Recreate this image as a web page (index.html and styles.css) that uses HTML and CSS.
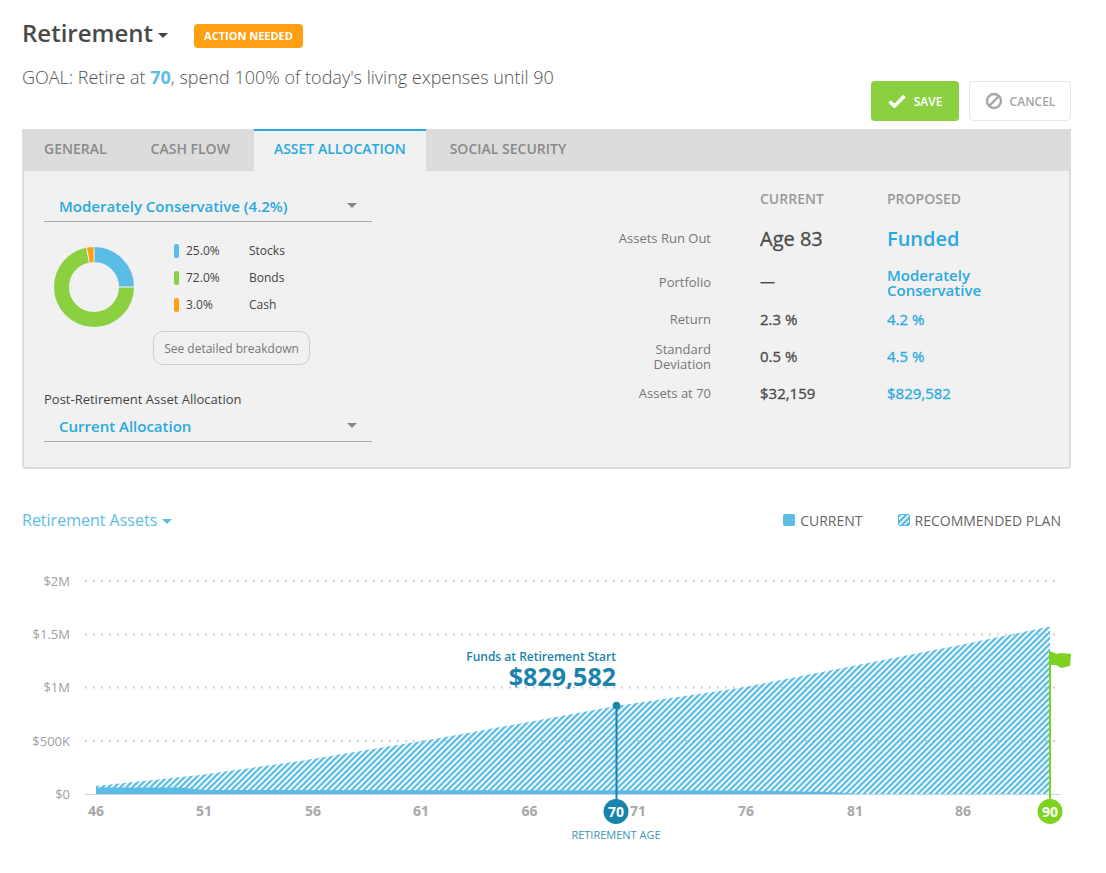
FILE: index.html
```html
<!DOCTYPE html>
<html lang="en">
<head>
  <meta charset="UTF-8" />
  <meta name="viewport" content="width=device-width, initial-scale=1.0" />
  <title>Retirement</title>
  <link rel="stylesheet" href="styles.css">
</head>
<body>
  <div class="page">
    <header class="top">
      <div class="top-left">
        <div class="title-row">
          <h1>Retirement</h1>
          <span class="caret caret-title"></span>
          <span class="badge">ACTION NEEDED</span>
        </div>
        <p class="goal">GOAL: Retire at <b>70</b>, spend 100% of today's living expenses until 90</p>
      </div>
      <div class="actions">
        <button class="btn btn-save">
          <svg width="18" height="14" viewBox="0 0 18 14"><path d="M1.5 7.5 L6.5 12 L16.5 2" fill="none" stroke="#fff" stroke-width="3.6"/></svg>
          SAVE
        </button>
        <button class="btn btn-cancel">
          <svg width="18" height="18" viewBox="0 0 18 18"><circle cx="9" cy="9" r="7" fill="none" stroke="#a9a9a9" stroke-width="2.4"/><path d="M4.2 13.8 L13.8 4.2" stroke="#a9a9a9" stroke-width="2.4"/></svg>
          CANCEL
        </button>
      </div>
    </header>

    <section class="panel">
      <nav class="tabs">
        <a class="tab">GENERAL</a>
        <a class="tab">CASH FLOW</a>
        <a class="tab active">ASSET ALLOCATION</a>
        <a class="tab">SOCIAL SECURITY</a>
      </nav>
      <div class="panel-body">
        <div class="alloc">
          <div class="select">
            <span>Moderately Conservative (4.2%)</span>
            <span class="caret caret-select"></span>
          </div>
          <div class="alloc-mix">
            <svg class="donut" width="84" height="84" viewBox="0 0 84 84">
              <g transform="rotate(-90 42 42)" fill="none" stroke-width="15">
                <circle cx="42" cy="42" r="32.5" stroke="#8bd041" pathLength="100" stroke-dasharray="72 28" stroke-dashoffset="-25"/>
                <circle cx="42" cy="42" r="32.5" stroke="#5bbde6" pathLength="100" stroke-dasharray="25 75"/>
                <circle cx="42" cy="42" r="32.5" stroke="#ff9f14" pathLength="100" stroke-dasharray="3 97" stroke-dashoffset="-97"/>
              </g>
              <path d="M42 2 V17 M67 42 H82 M34.500 2.700 L37.300 17.400" stroke="#f1f1f1" stroke-width="1"/>
            </svg>
            <div class="mix-side">
              <ul class="mix-list">
                <li><i class="chip chip-blue"></i><span class="pct">25.0%</span><span>Stocks</span></li>
                <li><i class="chip chip-green"></i><span class="pct">72.0%</span><span>Bonds</span></li>
                <li><i class="chip chip-orange"></i><span class="pct">3.0%</span><span>Cash</span></li>
              </ul>
              <button class="btn-breakdown">See detailed breakdown</button>
            </div>
          </div>
          <label class="post-label">Post-Retirement Asset Allocation</label>
          <div class="select select-post">
            <span>Current Allocation</span>
            <span class="caret caret-select"></span>
          </div>
        </div>

        <div class="stats">
          <div></div>
          <div class="stats-head">CURRENT</div>
          <div class="stats-head">PROPOSED</div>

          <div class="stats-label">Assets Run Out</div>
          <div class="val val-big">Age 83</div>
          <div class="val val-big val-funded">Funded</div>

          <div class="stats-label stats-label-low">Portfolio</div>
          <div class="val val-dash">—</div>
          <div class="val val-blue val-wrap">Moderately<br />Conservative</div>

          <div class="stats-label">Return</div>
          <div class="val">2.3 %</div>
          <div class="val val-blue">4.2 %</div>

          <div class="stats-label">Standard<br />Deviation</div>
          <div class="val">0.5 %</div>
          <div class="val val-blue">4.5 %</div>

          <div class="stats-label">Assets at 70</div>
          <div class="val">$32,159</div>
          <div class="val val-blue">$829,582</div>
        </div>
      </div>
    </section>

    <section class="chart-head">
      <div class="chart-title">Retirement Assets <span class="caret caret-chart"></span></div>
      <div class="legend">
        <span class="legend-item"><i class="swatch swatch-solid"></i>CURRENT</span>
        <span class="legend-item"><i class="swatch swatch-hatch"></i>RECOMMENDED PLAN</span>
      </div>
    </section>

    <svg class="chart" width="1106" height="290" viewBox="0 560 1106 290">
      <defs>
        <pattern id="hatch" width="4.243" height="4.243" patternUnits="userSpaceOnUse" patternTransform="rotate(45)">
          <rect width="2.3" height="4.243" fill="#5bbde6"/>
        </pattern>
      </defs>

      <g class="grid">
        <line x1="85" x2="1057" y1="581" y2="581"/>
        <line x1="85" x2="1057" y1="634.500" y2="634.500"/>
        <line x1="85" x2="1057" y1="687.500" y2="687.500"/>
        <line x1="85" x2="1057" y1="741" y2="741"/>
      </g>
      <g class="y-labels">
        <text x="70" y="586">$2M</text>
        <text x="70" y="639">$1.5M</text>
        <text x="70" y="692">$1M</text>
        <text x="70" y="746">$500K</text>
        <text x="70" y="799">$0</text>
      </g>

      <path d="M96 794 V786 L200 775 L300 761 L440 738 L616 706 L740 688 L960 645 L1050 626.500 V794 Z" fill="url(#hatch)"/>
      <path d="M96 794 V787.500 H180 L205 790 L740 790.500 L830 792 L860 794 Z" fill="#5bbde6"/>
      <line class="baseline" x1="85" x2="1060" y1="794.500" y2="794.500"/>

      <g class="x-labels">
        <text x="96" y="816">46</text>
        <text x="204" y="816">51</text>
        <text x="313" y="816">56</text>
        <text x="421" y="816">61</text>
        <text x="529.500" y="816">66</text>
        <text x="638" y="816">71</text>
        <text x="746" y="816">76</text>
        <text x="855" y="816">81</text>
        <text x="963" y="816">86</text>
      </g>

      <text class="funds-label" x="616" y="661">Funds at Retirement Start</text>
      <text class="funds-value" x="616" y="686">$829,582</text>
      <line x1="616.500" x2="616.500" y1="706" y2="800" stroke="#1a83ab" stroke-width="2"/>
      <circle cx="616.500" cy="705.500" r="3.800" fill="#1a83ab"/>
      <circle cx="616" cy="811.500" r="12.500" fill="#1a83ab"/>
      <text class="marker-text" x="616" y="816.500">70</text>
      <text class="age-label" x="616" y="839">RETIREMENT AGE</text>

      <line x1="1050" x2="1050" y1="652" y2="800" stroke="#7ed321" stroke-width="2"/>
      <path d="M1050 651 L1057 654 L1061 653 L1071 654 L1070 666 L1061 668 L1056 665 L1050 665 Z" fill="#7ed321"/>
      <circle cx="1050" cy="811.500" r="12.500" fill="#7ed321"/>
      <text class="marker-text" x="1050" y="816.500">90</text>
    </svg>
  </div>
</body>
</html>
```

FILE: styles.css
```css
body {
  margin: 0;
  font-family: 'Open Sans', sans-serif;
  background-color: #fff;
  color: #444;
}

.page {
  width: 1049px;
  margin-left: 22px;
}

/* top */
.top {
  height: 129px;
  display: flex;
  justify-content: space-between;
  align-items: flex-end;
  box-sizing: border-box;
  padding-bottom: 8px;
}

.top-left {
  align-self: flex-start;
}

.title-row {
  display: flex;
  align-items: center;
  height: 24px;
  margin-top: 24px;
}

h1 {
  margin: -8px 0 0 0;
  font-size: 24px;
  font-weight: 600;
  color: #4a4a4a;
}

.caret {
  display: inline-block;
  width: 0;
  height: 0;
  border-left: 5px solid transparent;
  border-right: 5px solid transparent;
  border-top: 5px solid #444;
}

.caret-title {
  margin-left: 5px;
  margin-top: -2px;
}

.badge {
  margin-left: 26px;
  width: 109px;
  height: 24px;
  line-height: 24px;
  text-align: center;
  background-color: #ff9f14;
  border-radius: 4px;
  color: #fff;
  font-size: 11px;
  font-weight: 700;
}

.goal {
  margin: 17px 0 0 0;
  font-size: 18px;
  line-height: 24px;
  font-weight: 300;
  color: #555;
}

.goal b {
  color: #5bbde6;
  font-weight: 700;
}

.actions {
  display: flex;
  gap: 10px;
}

.btn {
  height: 40px;
  display: flex;
  align-items: center;
  justify-content: center;
  border-radius: 4px;
  font-family: inherit;
  font-size: 12px;
  padding: 0;
}

.btn-save {
  width: 88px;
  gap: 8px;
  background-color: #8bd041;
  border: none;
  color: #fff;
  font-weight: 600;
}

.btn-cancel {
  width: 102px;
  gap: 7px;
  background-color: #fff;
  border: 1px solid #e8e8e8;
  color: #a4a4a4;
  font-weight: 600;
}

/* panel */
.tabs {
  display: flex;
  height: 42px;
  background-color: #dcdcdc;
}

.tab {
  padding: 0 22px;
  line-height: 36px;
  font-size: 14px;
  font-weight: 600;
  color: #8a8a8a;
  border-top: 2px solid transparent;
}

.tab.active {
  margin: 0 2px;
  padding: 0 20px;
  background-color: #f1f1f1;
  border-top-color: #2aa9e0;
  color: #2aa9e0;
}

.panel-body {
  height: 296px;
  display: flex;
  background-color: #f1f1f1;
  border: 2px solid #dcdcdc;
  border-top: none;
  border-radius: 0 0 4px 4px;
}

.alloc {
  width: 328px;
  margin-left: 20px;
  padding-top: 22px;
}

.select {
  height: 26px;
  display: flex;
  align-items: center;
  justify-content: space-between;
  padding: 0 15px 2px 15px;
  border-bottom: 1px solid #aaa;
  color: #2aa9e0;
  font-size: 15px;
  font-weight: 600;
}

.caret-select {
  border-top-color: #858585;
  margin-top: -1px;
}

.select-post {
  margin-top: 5px;
}

.alloc-mix {
  display: flex;
  margin-top: 23px;
  margin-left: 8px;
}

.donut {
  flex: none;
}

.mix-side {
  margin-left: 17px;
}

.mix-list {
  list-style: none;
  margin: -8px 0 0 0;
  padding: 0;
}

.mix-list li {
  display: flex;
  align-items: center;
  height: 27px;
  font-size: 12px;
  color: #444;
  margin-left: 21px;
}

.chip {
  width: 5px;
  height: 14px;
  border-radius: 2px;
  margin-right: 7px;
}

.chip-blue { background-color: #5bbde6; }
.chip-green { background-color: #8bd041; }
.chip-orange { background-color: #ff9f14; }

.pct {
  width: 63px;
}

.btn-breakdown {
  display: block;
  width: 157px;
  height: 34px;
  margin-top: 13px;
  padding: 0;
  background: transparent;
  border: 1px solid #ccc;
  border-radius: 10px;
  font-family: inherit;
  font-size: 12px;
  color: #777;
}

.post-label {
  display: block;
  margin-top: 25px;
  font-size: 13px;
  line-height: 18px;
  color: #444;
}

.stats {
  margin-left: 209px;
  margin-top: 7px;
  display: grid;
  grid-template-columns: 179px 127px 163px;
  grid-template-rows: 40px 40px 46px 31px 43px 31px;
  align-items: center;
}

.stats-head {
  font-size: 14px;
  font-weight: 600;
  color: #999;
}

.stats-label {
  text-align: right;
  font-size: 13px;
  line-height: 15px;
  color: #777;
  margin-right: 49px;
}

.stats-label-low {
  margin-top: 2px;
}

.val {
  margin-bottom: 2px;
  font-size: 15px;
  color: #4a4a4a;
  -webkit-text-stroke: 0.3px currentColor;
}

.val-big {
  margin-bottom: 0;
  font-size: 20px;
}

.val-funded {
  font-weight: 600;
  color: #2aa9e0;
  -webkit-text-stroke: 0;
}

.val-dash {
  margin-bottom: 0;
}

.val-blue {
  color: #2aa9e0;
}

.val-wrap {
  margin: 4px 0 0 0;
  font-weight: 600;
  line-height: 15px;
  -webkit-text-stroke: 0;
}

/* chart */
.chart-head {
  display: flex;
  justify-content: space-between;
  align-items: center;
  height: 24px;
  margin-top: 39px;
  padding-right: 10px;
}

.chart-title {
  font-size: 16px;
  color: #5bbde6;
}

.caret-chart {
  border-top-color: #5bbde6;
  margin-left: 1px;
  vertical-align: 2px;
}

.legend {
  display: flex;
  gap: 35px;
}

.legend-item {
  display: flex;
  align-items: center;
  font-size: 14px;
  color: #666;
}

.swatch {
  width: 12px;
  height: 12px;
  border-radius: 2px;
  margin-right: 5px;
}

.swatch-solid {
  background-color: #5bbde6;
}

.swatch-hatch {
  box-sizing: border-box;
  border: 1px solid #5bbde6;
  background: repeating-linear-gradient(135deg, #5bbde6 0 2px, #e3f3fb 2px 4px);
}

.chart {
  display: block;
  margin: 28px 0 0 -22px;
  font-family: 'Open Sans', sans-serif;
}

.grid line {
  stroke: #cfcfcf;
  stroke-width: 2;
  stroke-dasharray: 2 6;
}

.baseline {
  stroke: #c3d3e6;
  stroke-width: 1;
}

.y-labels text {
  font-size: 13px;
  fill: #a0a0a0;
  text-anchor: end;
}

.x-labels text {
  font-size: 14px;
  font-weight: 700;
  fill: #a8a8a8;
  text-anchor: middle;
}

.funds-label {
  font-size: 12px;
  font-weight: 600;
  fill: #1a83ab;
  text-anchor: end;
}

.funds-value {
  font-size: 25px;
  font-weight: 700;
  fill: #1a83ab;
  text-anchor: end;
}

.marker-text {
  font-size: 14px;
  font-weight: 700;
  fill: #fff;
  text-anchor: middle;
}

.age-label {
  font-size: 11px;
  fill: #3f92b3;
  text-anchor: middle;
}
```
